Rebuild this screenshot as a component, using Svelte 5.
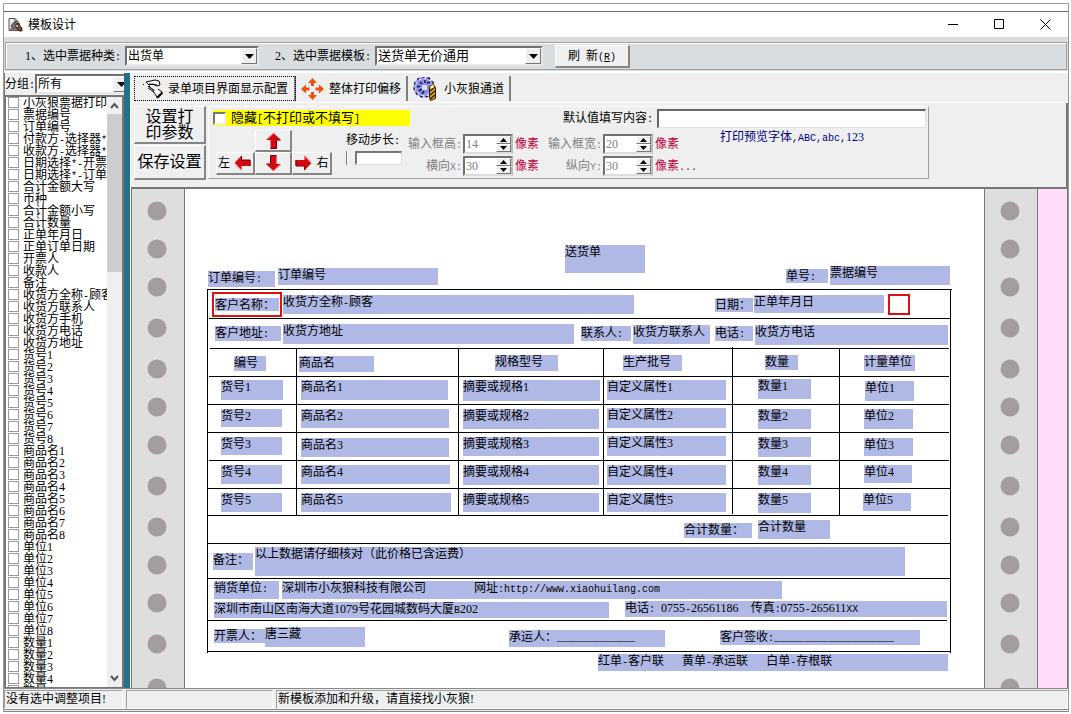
<script>
  const numbered = (name, count) => Array.from({ length: count }, (_, i) => `${name}${i + 1}`);

  const items = [
    '小灰狼票据打印', '票据编号', '订单编号', '付款方-选择器*', '收款方-选择器*',
    '日期选择*-开票', '日期选择*-订单', '合计金额大写', '币种', '合计金额小写',
    '合计数量', '正单年月日', '正单订单日期', '开票人', '收款人', '备注',
    '收货方全称-顾客', '收货方联系人', '收货方手机', '收货方电话', '收货方地址',
    ...numbered('货号', 8), ...numbered('商品名', 8), ...numbered('单位', 8), ...numbered('数量', 5)
  ];

  // Print fields on the paper: left, top, width, height, text
  const fields = [
    [380, 56, 80, 28, '送货单'],
    [23, 82, 67, 16, '订单编号:'],
    [93, 79, 160, 17, '订单编号'],
    [601, 80, 42, 14, '单号:'],
    [645, 77, 120, 19, '票据编号'],
    [30, 109, 64, 13, '客户名称：'],
    [98, 106, 351, 19, '收货方全称-顾客'],
    [530, 109, 38, 14, '日期：'],
    [569, 106, 130, 18, '正单年月日'],
    [30, 137, 66, 15, '客户地址:'],
    [98, 135, 291, 20, '收货方地址'],
    [396, 137, 50, 15, '联系人:'],
    [448, 136, 77, 19, '收货方联系人'],
    [530, 137, 38, 15, '电话:'],
    [570, 136, 193, 20, '收货方电话'],
    [49, 167, 32, 15, '编号'],
    [114, 167, 75, 16, '商品名'],
    [310, 166, 63, 16, '规格型号'],
    [438, 166, 59, 16, '生产批号'],
    [580, 166, 33, 15, '数量'],
    [679, 166, 51, 16, '计量单位'],
    [36, 191, 62, 20, '货号1'], [36, 220, 61, 18, '货号2'], [36, 248, 61, 18, '货号3'],
    [36, 276, 61, 19, '货号4'], [36, 304, 61, 19, '货号5'],
    [116, 191, 147, 20, '商品名1'], [116, 220, 148, 19, '商品名2'], [116, 249, 148, 19, '商品名3'],
    [116, 276, 149, 19, '商品名4'], [116, 304, 150, 19, '商品名5'],
    [278, 191, 137, 21, '摘要或规格1'], [278, 220, 136, 20, '摘要或规格2'], [278, 248, 136, 19, '摘要或规格3'],
    [278, 276, 136, 20, '摘要或规格4'], [278, 304, 136, 19, '摘要或规格5'],
    [422, 191, 119, 20, '自定义属性1'], [422, 219, 119, 20, '自定义属性2'], [422, 247, 119, 20, '自定义属性3'],
    [422, 276, 119, 20, '自定义属性4'], [422, 304, 119, 19, '自定义属性5'],
    [573, 190, 53, 20, '数量1'], [573, 220, 53, 20, '数量2'], [573, 248, 53, 20, '数量3'],
    [573, 276, 53, 20, '数量4'], [573, 304, 53, 20, '数量5'],
    [680, 192, 49, 20, '单位1'], [679, 220, 49, 20, '单位2'], [679, 249, 49, 18, '单位3'],
    [679, 276, 48, 18, '单位4'], [678, 304, 48, 18, '单位5'],
    [499, 334, 68, 15, '合计数量：'],
    [573, 331, 72, 19, '合计数量'],
    [28, 364, 40, 17, '备注：'],
    [70, 358, 650, 29, '以上数据请仔细核对（此价格已含运费）'],
    [29, 392, 65, 18, '销货单位:'],
    [97, 392, 500, 18, '深圳市小灰狼科技有限公司        网址:http://www.xiaohuilang.com'],
    [29, 413, 395, 16, '深圳市南山区南海大道1079号花园城数码大厦B202'],
    [440, 412, 322, 16, '电话: 0755-26561186  传真:0755-265611XX'],
    [29, 440, 51, 14, '开票人：'],
    [80, 438, 100, 20, '唐三藏'],
    [324, 441, 156, 17, '承运人：_____________'],
    [535, 441, 200, 15, '客户签收:____________________'],
    [413, 465, 350, 17, '红单-客户联   黄单-承运联   白单-存根联']
  ];

  // Ruled lines: x1, y1, x2, y2
  const lines = [
    [22, 100, 767, 100], [24, 129, 765, 129], [25, 159, 764, 159], [24, 187, 764, 187],
    [22, 215, 764, 215], [22, 243, 764, 243], [24, 271, 764, 271], [22, 299, 765, 299],
    [22, 326, 763, 326], [22, 354, 765, 354], [22, 389, 765, 389], [22, 431, 762, 431],
    [22, 462, 766, 462],
    [22, 100, 22, 464], [765, 100, 765, 464],
    [111, 159, 111, 326], [273, 159, 273, 326], [418, 159, 418, 326],
    [547, 158, 547, 325], [654, 159, 654, 326]
  ];

  const holes = [22, 60, 98, 139, 180, 218, 256, 297, 338, 376, 414, 455, 499];

  const split = (text) =>
    text.match(/[ -\/:-~]+|[^ -\/:-~]+/g).map((t) => ({ t, half: /^[ -\/:-~]/.test(t) }));

  let high = $state(14);
  let wide = $state(20);
  let posX = $state(30);
  let posY = $state(30);
  let step = $state(0);
</script>

{#snippet mixed(text)}{#each split(text) as part}{#if part.half}<span class="half">{part.t}</span>{:else}{part.t}{/if}{/each}{/snippet}

{#snippet drop()}
  <span class="drop" aria-hidden="true"><svg width="9" height="5" viewBox="0 0 9 5"><path d="M0 0h9L4.500 5z" /></svg></span>
{/snippet}

{#snippet strip()}
  <svg class="strip" aria-hidden="true">
    {#each holes as y}<circle cx="25" cy={y} r="9.500" />{/each}
  </svg>
{/snippet}

{#snippet arrow(turn)}
  <svg width="19" height="18" viewBox="-9 -9 18 18" aria-hidden="true">
    <g transform={`rotate(${turn})`}>
      <path d="M0-8 7.500-1H3V8H-3V-1H-7.500z" fill="#d40a12" />
      <path d="M-3 7.500H3V-1H7" fill="none" stroke="#7a0006" />
      <path d="M-6-2 0-7.500" stroke="#ff6060" />
    </g>
  </svg>
{/snippet}

{#snippet spin(id, value, change)}
  <span class="spin">
    <input {id} type="text" inputmode="numeric" {value} onchange={(e) => change(Number(e.currentTarget.value) || 0)} />
    <span class="steps">
      <button aria-label="+" onclick={() => change(value + 1)}><svg width="7" height="4"><path d="M0 4h7L3.500 0z" /></svg></button>
      <button aria-label="-" onclick={() => change(value - 1)}><svg width="7" height="4"><path d="M0 0h7L3.500 4z" /></svg></button>
    </span>
  </span>
{/snippet}

<div class="desk">
  <div class="window">
    <header class="title">
      <svg width="15" height="14" viewBox="0 0 15 14" aria-hidden="true">
        <path d="M1 .5h6l3 3v9H1z" fill="#e8e8f0" stroke="#555" />
        <path d="M7 .5v3h3" fill="none" stroke="#555" />
        <path d="M3 8l3-4 3 1 2 3-2 3-4 0z" fill="#6d7096" stroke="#332" stroke-width=".8" />
        <path d="M8 6l3-1 1 3 2 2v3h-3l-3-3z" fill="#6b4632" stroke="#2a1c16" stroke-width=".8" />
        <path d="M2 11h4" stroke="#a0522d" stroke-width="1.500" />
        <circle cx="9" cy="8" r="1" fill="#e9c9a0" />
      </svg>
      <h1>模板设计</h1>
      <button aria-label="最小化"><svg width="11" height="11"><path d="M0 5.500h10" /></svg></button>
      <button aria-label="最大化"><svg width="11" height="11"><path d="M.5.5h9v9h-9z" /></svg></button>
      <button aria-label="关闭"><svg width="11" height="11"><path d="M.5.5l10 10M10.500.5l-10 10" /></svg></button>
    </header>

    <div class="band">
      <div class="toolbar">
        <label for="kind">1、选中票据种类{@render mixed(':')}</label>
        <span class="combo kind">
          <select id="kind"><option>出货单</option></select>{@render drop()}
        </span>
        <label for="template" class="second">2、选中票据模板{@render mixed(':')}</label>
        <span class="combo template">
          <select id="template"><option>送货单无价通用</option></select>{@render drop()}
        </span>
        <button class="raised refresh">刷<span class="half">&nbsp;</span>新<span class="half">(<u>R</u>)</span></button>
      </div>
    </div>

    <div class="body">
      <aside>
        <div class="group-row">
          <label for="group">分组{@render mixed(':')}</label>
          <span class="combo"><select id="group"><option>所有</option></select>{@render drop()}</span>
        </div>
        <div class="list">
          <div class="rows">
            {#each items as item}
              <label><input type="checkbox" /><span>{@render mixed(item)}</span></label>
            {/each}
          </div>
          <div class="bar" aria-hidden="true">
            <svg width="9" height="17" viewBox="0 0 9 17"><path d="M1 11l3.500-4L8 11" /></svg>
            <div class="thumb"></div>
            <svg width="9" height="17" viewBox="0 0 9 17"><path d="M1 6l3.500 4L8 6" /></svg>
          </div>
        </div>
      </aside>
      <div class="splitter"></div>

      <main>
        <nav class="tabs">
          <button class="tab active">
            <svg width="22" height="20" viewBox="0 0 22 20" aria-hidden="true">
              <path d="M3 3l9-2 4 1 1 4-3 1-4-2-4 1z" fill="#fff" stroke="#000" />
              <path d="M6 5l8 1M5 7l7 5-1 1-6-4M6 7l7 7h2" fill="none" stroke="#000" />
              <path d="M10 12l4 6 5-5-4-3" fill="#fff" stroke="#000" />
              <path d="M13 18.500l6-6 1 2-5 5z" fill="#000" />
              <path d="M0 6l1-1" stroke="#000" />
            </svg>
            录单项目界面显示配置
          </button>
          <button class="tab">
            <svg width="23" height="22" viewBox="0 0 23 22" fill="#f0500f" aria-hidden="true">
              <path d="M11.500 0l4.500 5h-3v3h-3V5H7zM11.500 22L7 17h3v-3h3v3h3zM0 11l5-4.500v3h3.500v3H5v3zM23 11l-5 4.500v-3h-3.500v-3H18v-3z" />
            </svg>
            整体打印偏移
          </button>
          <button class="tab">
            <svg width="26" height="24" viewBox="0 0 26 24" aria-hidden="true">
              <circle cx="11" cy="10" r="8" fill="#8c8ce6" />
              <circle cx="11" cy="10" r="9" fill="none" stroke="#9a9af0" stroke-width="3" stroke-dasharray="3.500 2" />
              <circle cx="11" cy="10" r="10" fill="none" stroke="#101040" stroke-width="1.500" stroke-dasharray="2.500 3.150" />
              <path d="M7 5l2 2M12 3v3M4 10l3-1M6 14l3-2M9 17l2-3M14 6l3-1" stroke="#181858" stroke-width="1.600" />
              <path d="M9 8h5v5H9z" fill="#dcdcff" />
              <path d="M16.500 9.500l4-2 2 3v11l-5 2-1-3z" fill="#e0a020" stroke="#30200a" />
              <path d="M17 14l5-4M17 18l5-4M17 22l5-4" stroke="#30200a" stroke-width="1.500" />
              <path d="M17 9.500l3-1.500 1.500 2-3 1.500z" fill="#fff2b0" />
            </svg>
            小灰狼通道
          </button>
        </nav>

        <section class="config">
          <div class="big">
            <button class="raised">设置打<br />印参数</button>
            <button class="raised">保存设置</button>
          </div>
          <div class="frame">
            <div class="top">
              <label class="hide"><input type="checkbox" /><span>隐藏{@render mixed('[')}不打印或不填写{@render mixed(']')}</span></label>
              <label for="preset">默认值填写内容{@render mixed(':')}</label>
              <input id="preset" type="text" />
            </div>
            <div class="lower">
              <div class="pad">
                <button class="raised up" aria-label="上">{@render arrow(0)}</button>
                <button class="raised left">左{@render arrow(-90)}</button>
                <button class="raised" aria-label="下">{@render arrow(180)}</button>
                <button class="raised">{@render arrow(90)}右</button>
              </div>
              <div class="move">
                <label for="step">移动步长{@render mixed(':')}</label>
                <input id="step" type="range" min="0" max="10" bind:value={step} />
              </div>
              <div class="sizes">
                <label for="high">输入框高{@render mixed(':')}</label>
                {@render spin('high', high, (v) => (high = v))}
                <em>像素</em>
                <label for="wide">输入框宽{@render mixed(':')}</label>
                {@render spin('wide', wide, (v) => (wide = v))}
                <em>像素</em>
                <label for="posx">横向{@render mixed('X:')}</label>
                {@render spin('posx', posX, (v) => (posX = v))}
                <em>像素</em>
                <label for="posy">纵向{@render mixed('Y:')}</label>
                {@render spin('posy', posY, (v) => (posY = v))}
                <em>像素<span class="half more"> ...</span></em>
              </div>
              <p class="sample">{@render mixed('打印预览字体,ABC,abc,')}123</p>
            </div>
          </div>
        </section>

        <section class="canvas">
          {@render strip()}
          <div class="paper">
            <svg class="rules" aria-hidden="true">
              {#each lines as [x1, y1, x2, y2]}<line {x1} {y1} {x2} {y2} />{/each}
            </svg>
            {#each fields as [x, y, w, h, text]}
              <div class="field" style="left:{x}px;top:{y}px;width:{w}px;height:{h}px">{@render mixed(text)}</div>
            {/each}
            <div class="mark" style="left:27px;top:103px;width:70px;height:25px"></div>
            <div class="mark" style="left:703px;top:105px;width:22px;height:21px"></div>
          </div>
          {@render strip()}
          <div class="pink"></div>
        </section>
      </main>
    </div>

    <footer>
      <span class="one">没有选中调整项目!</span>
      <span class="two"></span>
      <span class="three">新模板添加和升级，请直接找小灰狼!</span>
    </footer>
  </div>
</div>

<style>
  :global(body) { margin: 0; background: #fff; }
  .desk, .desk * { box-sizing: border-box; }
  .desk {
    height: 100vh;
    padding: 3px 2px 2px 3px;
    font: 12px/14px "Liberation Serif", "Noto Sans CJK SC", sans-serif;
    color: #000;
  }
  .window {
    display: flex;
    flex-direction: column;
    height: 100%;
    border: 1px solid #999;
    border-width: 1px 1px 3px;
    border-bottom: 3px double #888;
    background: #efefef;
  }
  button, input, select { font: inherit; color: inherit; margin: 0; padding: 0; border-radius: 0; }
  button { cursor: default; }
  .half { font: 10px/1 "Liberation Mono", monospace; white-space: pre; }

  .title {
    display: flex;
    align-items: center;
    height: 33px;
    padding: 8px 17px 0 4px;
    background: linear-gradient(#fff 7px, #666 7px, #666 8px, #fff 8px);
  }
  .title h1 { flex: 1; margin: 0 0 0 5px; font: inherit; font-size: 12px; }
  .title button { display: flex; margin-left: 35px; border: 0; background: none; }
  .title button path { fill: none; stroke: #000; }

  .band { padding: 5px 1px 1px; background: #dadde0; border-bottom: 2px solid #fff; }
  .toolbar {
    display: flex;
    align-items: center;
    height: 28px;
    padding-left: 19px;
    border: 1px solid #a0a0a0;
    box-shadow: inset 1px 1px #fff;
  }
  .combo {
    display: grid;
    grid-template-columns: 1fr 16px;
    height: 20px;
    border: 2px solid #707070;
    border-color: #707070 #e8e8e8 #e8e8e8 #707070;
    background: #fff;
  }
  .combo select {
    grid-area: 1 / 1 / 2 / 3;
    width: 100%;
    padding-left: 1px;
    border: 0;
    outline: 0;
    appearance: none;
    background: transparent;
  }
  .drop {
    grid-area: 1 / 2;
    display: grid;
    place-items: center;
    border: 1px solid #fff;
    border-right-color: #777;
    border-bottom-color: #777;
    background: #efefef;
    pointer-events: none;
  }
  .kind { width: 134px; margin-left: 4px; }
  .second { margin-left: 16px; }
  .template { width: 168px; margin-left: 4px; font-size: 13px; }
  .raised {
    border: 1px solid #fff;
    border-right: 2px solid #858585;
    border-bottom: 2px solid #858585;
    background: #efefef;
  }
  .refresh { width: 75px; height: 23px; margin-left: 12px; }

  .body { display: flex; flex: 1; min-height: 0; }
  aside { display: flex; flex-direction: column; width: 120px; overflow: hidden; border-left: 1px solid #777; }
  .group-row { display: flex; align-items: center; height: 22px; white-space: nowrap; }
  .group-row .combo { flex: none; width: 96px; }
  .list {
    display: flex;
    flex: 1;
    min-height: 0;
    border: 1px solid #777;
    border-width: 2px 2px 1px 1px;
    background: #fff;
  }
  .rows { flex: 1; min-width: 0; overflow: hidden; padding-left: 2px; }
  .rows label { display: flex; height: 12px; line-height: 12px; white-space: nowrap; }
  .rows input {
    flex: none;
    appearance: none;
    width: 11px;
    height: 11px;
    margin-right: 4px;
    border: 1px solid #999;
    background: #fff;
  }
  input[type='checkbox']:checked { box-shadow: inset 0 0 0 2px #fff; background: #333; }
  .bar { display: flex; flex-direction: column; align-items: center; width: 15px; background: #efefef; }
  .bar path { fill: none; stroke: #555; stroke-width: 2; }
  .bar svg:last-child { margin-top: auto; }
  .thumb { width: 100%; height: 158px; background: #cdcdcd; }
  .splitter { width: 7px; background: #22708a; border-right: 1px solid #fff; }

  main { display: flex; flex: 1; flex-direction: column; min-width: 0; }
  .tabs { display: flex; height: 30px; padding: 3px 3px 1px; border-bottom: 1px solid #fff; }
  .tab {
    display: flex;
    align-items: center;
    gap: 5px;
    padding: 0 5px;
    border: 0;
    border-right: 2px solid #808080;
    background: none;
    white-space: nowrap;
  }
  .tab.active { gap: 3px; padding: 0 6px 0 9px; outline: 1px dotted #000; outline-offset: -1px; }

  .config {
    display: flex;
    gap: 2px;
    height: 86px;
    padding: 3px 4px 8px 3px;
    border-right: 2px solid #777;
    border-bottom: 2px solid #777;
  }
  .big { display: grid; grid-template-rows: 38px 35px; gap: 1px; width: 72px; }
  .big button { font-size: 16px; line-height: 16px; white-space: nowrap; }
  .frame {
    display: flex;
    flex-direction: column;
    flex: 0 1 721px;
    border: 1px solid #a0a0a0;
    border-top-color: #fff;
    border-left-color: #fff;
  }
  .top { display: flex; align-items: center; height: 22px; padding: 0 2px 0 4px; }
  .hide {
    display: flex;
    align-items: center;
    gap: 5px;
    width: 197px;
    height: 16px;
    margin-right: auto;
    background: #ff0;
    font-size: 13px;
  }
  .hide input {
    appearance: none;
    width: 13px;
    height: 13px;
    border: 2px solid #777;
    border-right-color: #eee;
    border-bottom-color: #eee;
    background: #fff;
  }
  #preset {
    width: 269px;
    height: 19px;
    margin-left: 4px;
    border: 1px solid #e0e0e0;
    border-top: 2px solid #666;
    border-left: 2px solid #666;
    background: #fff;
  }
  .lower { display: flex; align-items: flex-start; padding-left: 7px; }
  .pad { display: grid; grid-template: 22px 23px / 39px 37px 40px; padding-top: 1px; }
  .pad button { display: flex; align-items: center; justify-content: center; gap: 3px; }
  .pad .up { grid-column: 2; }
  .pad .left { grid-column: 1; }
  .move { display: flex; flex-direction: column; gap: 2px; width: 56px; margin: 4px 0 0 14px; white-space: nowrap; }
  #step { appearance: none; width: 56px; height: 17px; background: none; }
  #step::-webkit-slider-runnable-track {
    height: 14px;
    border: 1px solid #ddd;
    border-top: 2px solid #777;
    border-left: 1px solid #777;
    background: #fff;
  }
  #step::-webkit-slider-thumb {
    appearance: none;
    width: 10px;
    height: 17px;
    margin-top: -2px;
    background: linear-gradient(90deg, #fff 1px, #efefef 1px, #efefef 8px, #777 8px);
    clip-path: polygon(0 0, 100% 0, 100% 75%, 50% 100%, 0 75%);
  }
  .sizes {
    display: grid;
    grid-template-columns: 61px 50px 35px 55px 50px 67px;
    grid-auto-rows: 20px;
    row-gap: 2px;
    align-items: center;
    padding-top: 5px;
  }
  .sizes label { padding-right: 1px; text-align: right; color: #808080; white-space: nowrap; }
  .sizes em { padding-left: 2px; font-style: normal; color: #c4003c; white-space: nowrap; }
  .more { color: #333; }
  .spin {
    display: flex;
    height: 20px;
    border: 2px solid #707070;
    border-right-color: #bbb;
    border-bottom-color: #ddd;
    background: #fff;
    color: #808080;
  }
  .spin input { flex: 1; min-width: 0; padding-left: 1px; border: 0; outline: 0; background: none; }
  .steps { display: grid; grid-template-rows: 8px 8px; width: 15px; }
  .steps button {
    display: grid;
    place-items: center;
    border: 1px solid #fff;
    border-right-color: #777;
    border-bottom-color: #777;
    background: #efefef;
  }
  .sample { margin: 0; padding-top: 1px; color: #000080; white-space: nowrap; }

  .canvas { display: flex; flex: 1; min-height: 0; overflow: hidden; background: #fff; }
  .strip { flex: none; width: 54px; height: 100%; border: 1px solid #777; border-top: 0; border-bottom: 0; background: #dedede; }
  .strip circle { fill: #a39d9d; }
  .paper { position: relative; flex: 1; min-width: 0; overflow: hidden; }
  .rules { position: absolute; inset: 0; width: 100%; height: 100%; }
  .rules line { stroke: #000; shape-rendering: crispEdges; }
  .field { position: absolute; background: #b0b9e6; line-height: 15px; white-space: pre; }
  .mark { position: absolute; border: 2px solid #e01010; }
  .pink { width: 30px; background: #ffdcf8; border-right: 1px solid #777; }

  footer {
    display: flex;
    gap: 3px;
    height: 21px;
    padding-top: 1px;
    border-top: 1px solid #888;
    line-height: 16px;
  }
  footer span { padding-left: 1px; border: 1px solid #a0a0a0; border-right-color: #fff; border-bottom-color: #fff; white-space: nowrap; }
  .one { width: 119px; }
  .two { width: 147px; }
  .three { flex: 1; }
</style>
